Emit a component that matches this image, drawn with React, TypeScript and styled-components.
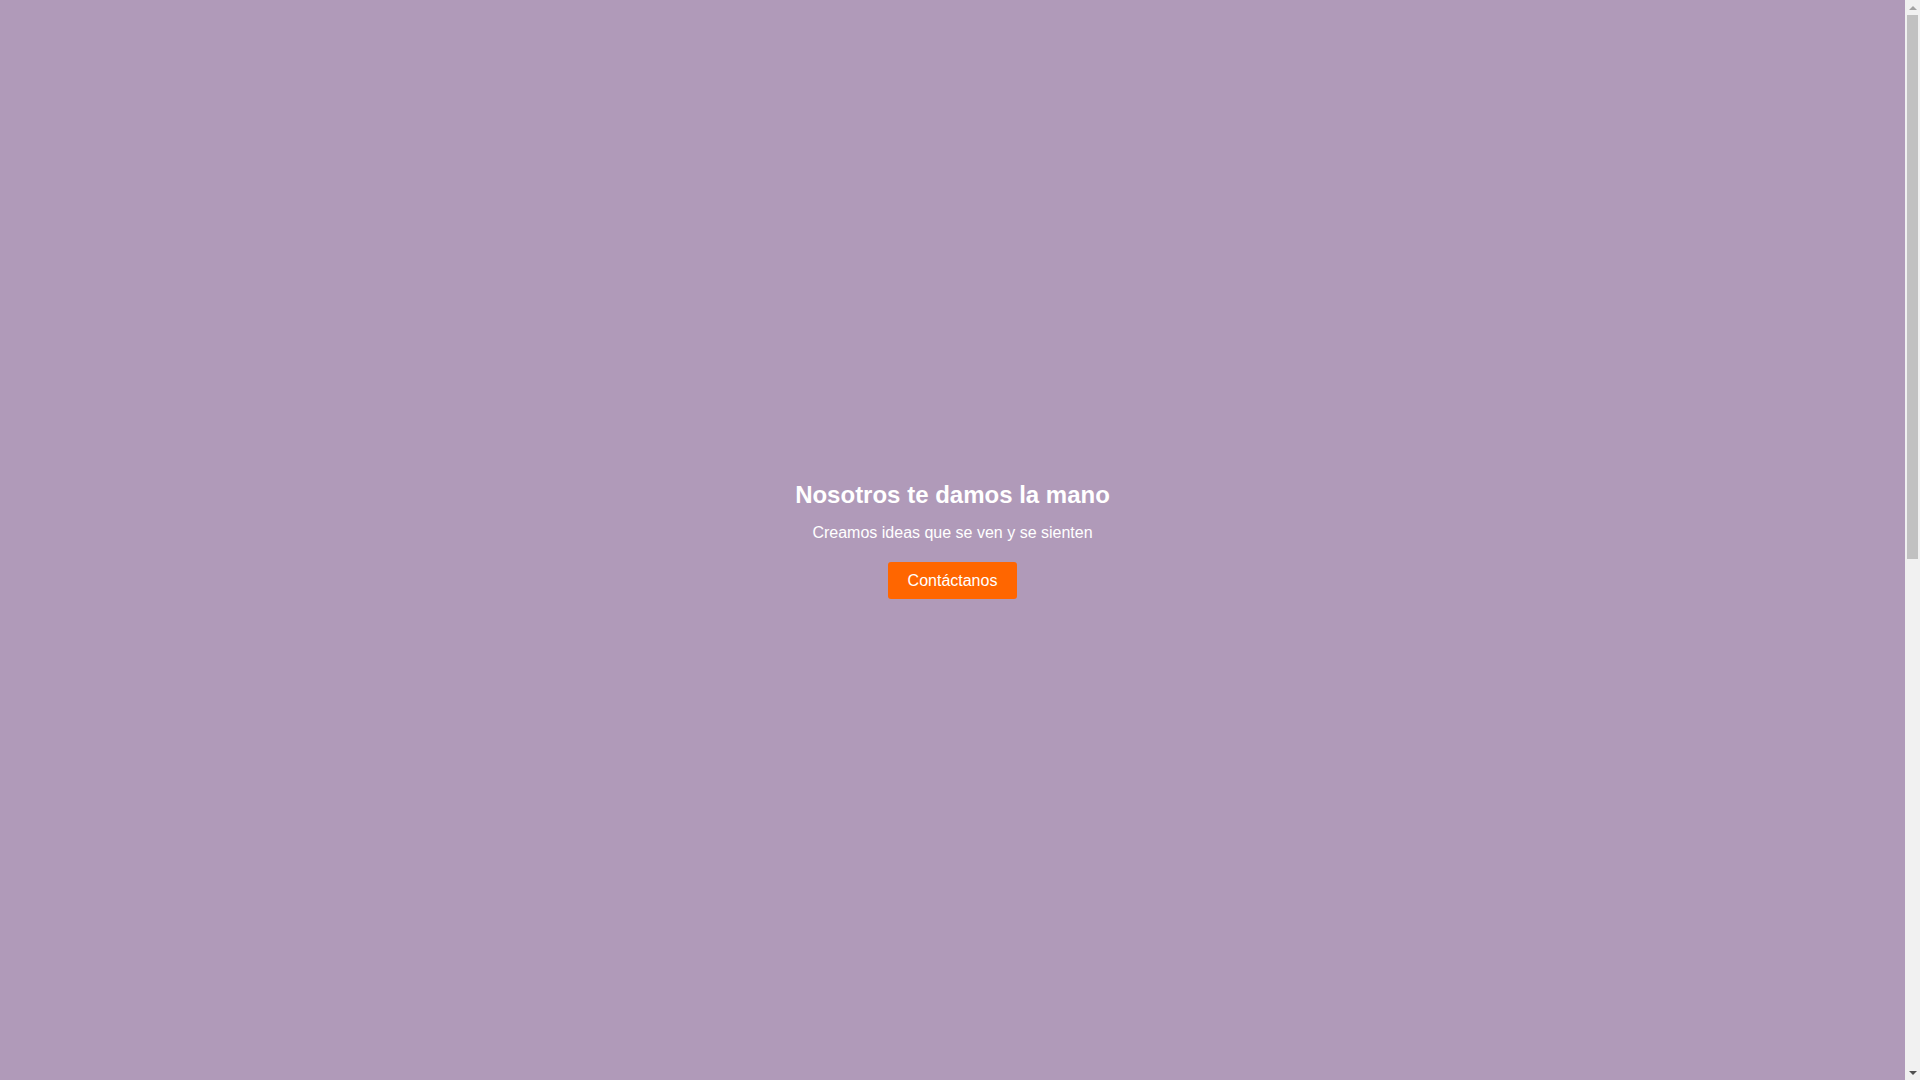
import React from "react";
import styled, { createGlobalStyle } from "styled-components";

const GlobalStyle = createGlobalStyle`
  html, body {
    margin: 0;
    padding: 0;
    background: #b09ab9;
    font-family: "Liberation Sans", Arial, sans-serif;
  }
  body {
    padding-right: 15px;
  }
`;

const Hero = styled.section`
  height: 100vh;
  display: flex;
  flex-direction: column;
  align-items: center;
  justify-content: center;
  text-align: center;
  color: #ffffff;
  background: #b09ab9;
`;

const Title = styled.h1`
  margin: 0 0 14px;
  font-size: 24px;
  font-weight: 700;
  line-height: 1.2;
`;

const Subtitle = styled.p`
  margin: 0 0 20px;
  font-size: 16px;
  line-height: 1.2;
`;

const CtaButton = styled.a`
  display: inline-block;
  padding: 10px 20px;
  background: #ff6600;
  color: #ffffff;
  font-size: 16px;
  line-height: 17px;
  border-radius: 3px;
  text-decoration: none;
  cursor: pointer;
`;

const Filler = styled.section`
  height: 1004px;
  background: #b09ab9;
`;

/* Visual stand-in for the browser's vertical scrollbar */
const ScrollTrack = styled.div`
  position: fixed;
  top: 0;
  right: 0;
  width: 15px;
  height: 100vh;
  background: #f1f1f1;
  display: flex;
  flex-direction: column;
  z-index: 10;
`;

const ScrollArrow = styled.div<{ $dir: "up" | "down"; $color: string }>`
  height: 15px;
  flex: 0 0 15px;
  display: flex;
  align-items: center;
  justify-content: center;
  &::before {
    content: "";
    width: 0;
    height: 0;
    border-left: 4px solid transparent;
    border-right: 4px solid transparent;
    ${(p) =>
      p.$dir === "up"
        ? `border-bottom: 4px solid ${p.$color};`
        : `border-top: 4px solid ${p.$color};`}
  }
`;

const ScrollBody = styled.div`
  flex: 1;
  padding: 0 2px;
`;

const ScrollThumb = styled.div`
  height: 544px;
  background: #c1c1c1;
`;

export default function App() {
  return (
    <>
      <GlobalStyle />
      <Hero>
        <Title>Nosotros te damos la mano</Title>
        <Subtitle>Creamos ideas que se ven y se sienten</Subtitle>
        <CtaButton href="#contacto">Contáctanos</CtaButton>
      </Hero>
      <Filler />
      <ScrollTrack aria-hidden="true">
        <ScrollArrow $dir="up" $color="#a3a3a3" />
        <ScrollBody>
          <ScrollThumb />
        </ScrollBody>
        <ScrollArrow $dir="down" $color="#505050" />
      </ScrollTrack>
    </>
  );
}
